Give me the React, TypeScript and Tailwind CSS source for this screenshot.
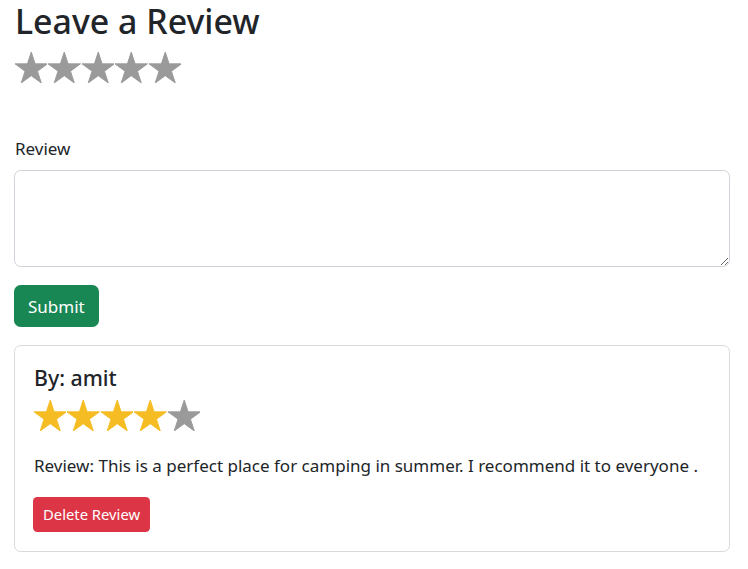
function Star({ color }: { color: string }) {
  return (
    <div className="w-[33.6px] h-[33px] flex items-center justify-center shrink-0">
      <svg width="32.5" height="31" viewBox="0 0 100 95.1">
        <path
          d="M50 0 L61.8 36.3 L100 36.3 L69.1 58.8 L80.9 95.1 L50 72.6 L19.1 95.1 L30.9 58.8 L0 36.3 L38.2 36.3 Z"
          fill={color}
          stroke={color}
          strokeWidth="3"
          strokeLinejoin="round"
        />
      </svg>
    </div>
  );
}

const GRAY = "#9a9a9a";
const GOLD = "#f5bd23";

export default function App() {
  const rating = 4;
  return (
    <div
      className="pl-[14px] pr-[18px] text-[#212529] text-[17px] leading-[1.5] bg-white min-h-[569px]"
      style={{ fontFamily: '"Noto Sans", sans-serif' }}
    >
      <h1 className="text-[33.9px] leading-[1.2] font-medium mb-[9px] pt-[1px] pl-[1px]">Leave a Review</h1>
      <div className="flex h-[33px]">
        {[0, 1, 2, 3, 4].map((i) => (
          <Star key={i} color={GRAY} />
        ))}
      </div>
      <div className="pt-[52px]">
        <label className="block mb-[9px] pl-[1px]">Review</label>
        <textarea className="block w-full h-[97px] border border-[#ced4da] rounded-[6.6px] resize-y outline-none px-3 py-2" />
      </div>
      <button className="mt-[18px] bg-[#198754] text-white rounded-[6.6px] h-[42px] px-[14px] text-[17px] leading-none">
        Submit
      </button>
      <div className="mt-[18px] border border-[#dadada] rounded-[6.6px] px-[18px] pt-[19px] pb-[19px]">
        <h5 className="text-[21.3px] leading-[1.2] font-medium mb-[8px] pl-[1px]">By: amit</h5>
        <div className="flex h-[34px] items-center">
          {[0, 1, 2, 3, 4].map((i) => (
            <Star key={i} color={i < rating ? GOLD : GRAY} />
          ))}
        </div>
        <p className="mt-[20px] mb-[19px] pl-[1px]">
          Review: This is a perfect place for camping in summer. I recommend it to everyone .
        </p>
        <button className="bg-[#dc3545] text-white rounded-[4.4px] h-[35px] px-[10px] text-[14.8px] leading-none">
          Delete Review
        </button>
      </div>
    </div>
  );
}
